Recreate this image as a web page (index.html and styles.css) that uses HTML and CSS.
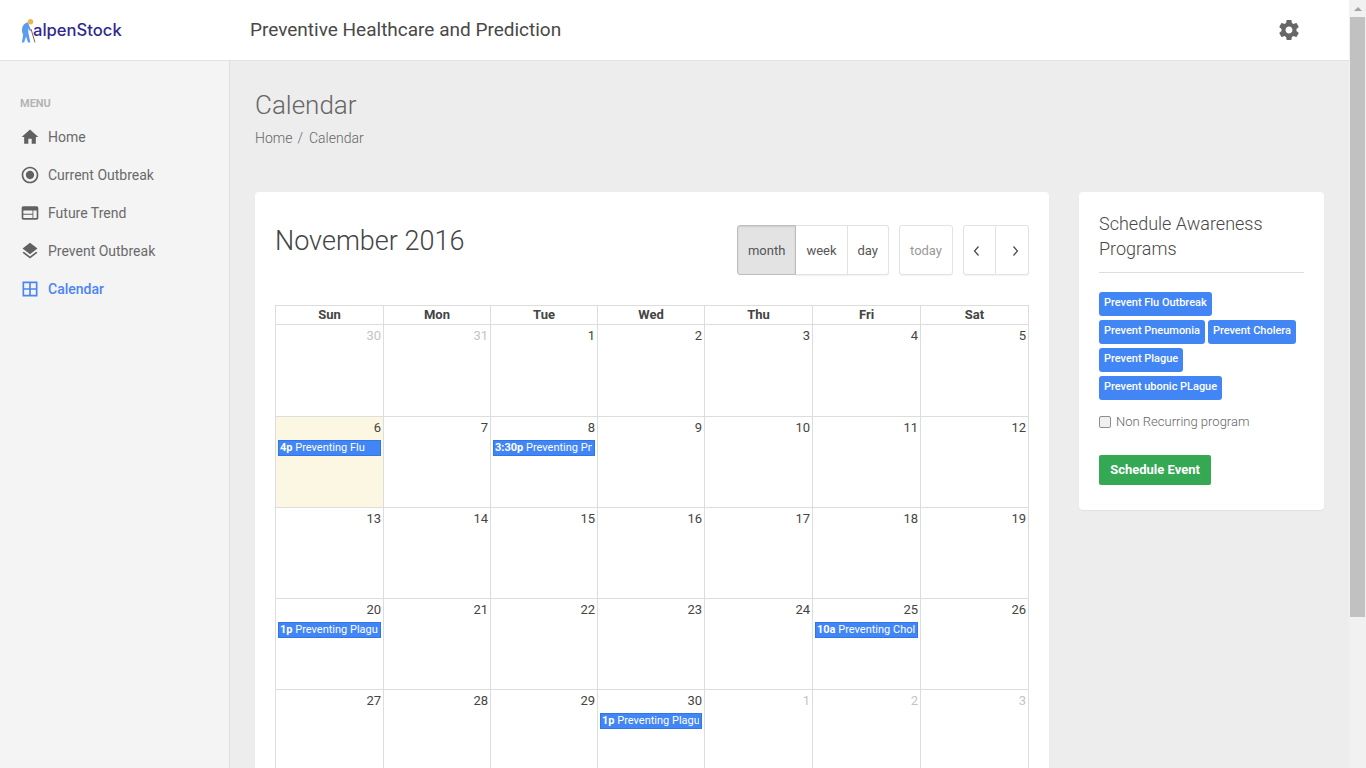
FILE: index.html
```html
<!DOCTYPE html>
<html lang="en">
<head>
  <meta charset="UTF-8"/>
  <title>alpenStock - Calendar</title>
  <link rel="stylesheet" href="styles.css">
</head>
<body>

  <header class="topbar">
    <a class="logo">
      <svg class="logo-mark" width="18" height="24" viewBox="0 0 18 24">
        <circle cx="9.500" cy="2.800" r="2.700" fill="#f0b64c"/>
        <path d="M6.500 3.200C3 4.200 1 7.500 1 11c0 2 .5 3.500 1.200 4.800L.8 23.500h2.400l1.800-6 2 6h2.400L7.500 14.500 7 9.500c.6 1 1.400 2 2.400 2.700l.8-1C8.800 9.500 8.600 6 6.500 3.200z" fill="#5a9cf0"/>
        <path d="M10 10l4 13.500" stroke="#8a6a4a" stroke-width="1" fill="none"/>
      </svg>
      <span class="logo-text">alpenStock</span>
    </a>
    <div class="topbar-title">Preventive Healthcare and Prediction</div>
    <svg class="settings" width="24" height="24" viewBox="0 0 24 24"><path d="M19.430 12.980c.04-.32.07-.64.07-.98s-.03-.66-.07-.98l2.110-1.650c.19-.15.24-.42.12-.64l-2-3.460c-.12-.22-.39-.3-.61-.22l-2.490 1c-.52-.4-1.080-.73-1.690-.98l-.38-2.650C14.460 2.180 14.250 2 14 2h-4c-.25 0-.46.18-.49.42l-.38 2.650c-.61.25-1.170.59-1.690.98l-2.490-1c-.23-.09-.49 0-.61.22l-2 3.460c-.13.22-.07.49.12.64l2.110 1.650c-.04.32-.07.65-.07.98s.03.66.07.98l-2.110 1.650c-.19.15-.24.42-.12.64l2 3.460c.12.22.39.3.61.22l2.490-1c.52.4 1.080.73 1.690.98l.38 2.650c.03.24.24.42.49.42h4c.25 0 .46-.18.49-.42l.38-2.650c.61-.25 1.170-.59 1.690-.98l2.490 1c.23.09.49 0 .61-.22l2-3.460c.12-.22.07-.49-.12-.64l-2.110-1.650zM12 15.500c-1.930 0-3.500-1.570-3.500-3.500s1.570-3.500 3.500-3.500 3.500 1.570 3.500 3.500-1.570 3.500-3.500 3.500z"/></svg>
  </header>

  <div class="layout">
    <!-- Sidebar -->
    <nav class="sidebar">
      <div class="menu-label">MENU</div>
      <a class="menu-item">
        <svg width="20" height="20" viewBox="0 0 24 24"><path d="M10 20v-6h4v6h5v-8h3L12 3 2 12h3v8z"/></svg>
        Home
      </a>
      <a class="menu-item">
        <svg width="20" height="20" viewBox="0 0 24 24"><path d="M12 7c-2.760 0-5 2.240-5 5s2.240 5 5 5 5-2.240 5-5-2.240-5-5-5zm0-5C6.480 2 2 6.480 2 12s4.480 10 10 10 10-4.480 10-10S17.520 2 12 2zm0 18c-4.420 0-8-3.580-8-8s3.580-8 8-8 8 3.580 8 8-3.580 8-8 8z"/></svg>
        Current Outbreak
      </a>
      <a class="menu-item">
        <svg width="20" height="20" viewBox="0 0 24 24"><path d="M20 4H4c-1.100 0-1.990.9-1.990 2L2 18c0 1.100.9 2 2 2h16c1.100 0 2-.9 2-2V6c0-1.100-.9-2-2-2zm-5 14H4v-4h11v4zm0-5H4V9h11v4zm5 5h-4V9h4v9z"/></svg>
        Future Trend
      </a>
      <a class="menu-item">
        <svg width="20" height="20" viewBox="0 0 24 24"><path d="M11.990 18.540l-7.370-5.730L3 14.070l9 7 9-7-1.630-1.270-7.380 5.740zM12 16l7.360-5.730L21 9l-9-7-9 7 1.630 1.270L12 16z"/></svg>
        Prevent Outbreak
      </a>
      <a class="menu-item active">
        <svg width="20" height="20" viewBox="0 0 24 24"><path d="M3 3v18h18V3H3zm8 16H5v-6h6v6zm0-8H5V5h6v6zm8 8h-6v-6h6v6zm0-8h-6V5h6v6z"/></svg>
        Calendar
      </a>
    </nav>

    <main class="content">
      <h1 class="page-title">Calendar</h1>
      <div class="breadcrumb"><span>Home</span><span class="sep">/</span><span>Calendar</span></div>

      <div class="columns">
        <section class="card calendar-card">
          <div class="cal-toolbar">
            <h2 class="cal-title">November 2016</h2>
            <div class="cal-buttons">
              <div class="btn-group">
                <button class="cal-btn pressed">month</button>
                <button class="cal-btn">week</button>
                <button class="cal-btn">day</button>
              </div>
              <button class="cal-btn today">today</button>
              <div class="btn-group">
                <button class="cal-btn arrow prev"><svg width="12" height="12" viewBox="0 0 12 12"><path d="M7.500 1.500L3.500 6l4 4.500"/></svg></button>
                <button class="cal-btn arrow next"><svg width="12" height="12" viewBox="0 0 12 12"><path d="M4.500 1.500L8.500 6l-4 4.500"/></svg></button>
              </div>
            </div>
          </div>

          <table class="cal-table">
            <thead>
              <tr><th>Sun</th><th>Mon</th><th>Tue</th><th>Wed</th><th>Thu</th><th>Fri</th><th>Sat</th></tr>
            </thead>
            <tbody>
              <tr class="first-week">
                <td class="other">30</td><td class="other">31</td><td>1</td><td>2</td><td>3</td><td>4</td><td>5</td>
              </tr>
              <tr>
                <td class="today-cell">6<div class="event"><b>4p</b> Preventing Flu</div></td>
                <td>7</td>
                <td>8<div class="event"><b>3:30p</b> Preventing Pneumonia</div></td>
                <td>9</td><td>10</td><td>11</td><td>12</td>
              </tr>
              <tr>
                <td>13</td><td>14</td><td>15</td><td>16</td><td>17</td><td>18</td><td>19</td>
              </tr>
              <tr>
                <td>20<div class="event"><b>1p</b> Preventing Plague</div></td>
                <td>21</td><td>22</td><td>23</td><td>24</td>
                <td>25<div class="event"><b>10a</b> Preventing Cholera</div></td>
                <td>26</td>
              </tr>
              <tr>
                <td>27</td><td>28</td><td>29</td>
                <td>30<div class="event"><b>1p</b> Preventing Plague</div></td>
                <td class="other">1</td><td class="other">2</td><td class="other">3</td>
              </tr>
            </tbody>
          </table>
        </section>

        <aside class="card side-card">
          <h3 class="side-title">Schedule Awareness Programs</h3>
          <div class="tags">
            <span class="tag">Prevent Flu Outbreak</span>
            <span class="tag">Prevent Pneumonia</span>
            <span class="tag">Prevent Cholera</span>
            <span class="tag">Prevent Plague</span>
            <span class="tag">Prevent ubonic PLague</span>
          </div>
          <label class="check-row"><span class="check-box"></span>Non Recurring program</label>
          <button class="schedule-btn">Schedule Event</button>
        </aside>
      </div>
    </main>
  </div>

  <!-- Window scrollbar as it appears in the screenshot -->
  <div class="scrollbar">
    <div class="scroll-arrow"></div>
    <div class="scroll-thumb"></div>
  </div>

</body>
</html>
```

FILE: styles.css
```css
* { box-sizing: border-box; margin: 0; padding: 0; }
body, html { height: 100%; font-family: Roboto, sans-serif; overflow: hidden; }
body { background: #ededed; color: #5f5f5f; font-size: 14px; }

.topbar {
  display: flex;
  align-items: center;
  height: 61px;
  padding-right: 17px;
  background: #fff;
  border-bottom: 1px solid #e2e2e2;
}

.logo {
  display: flex;
  align-items: center;
  width: 250px;
  padding-left: 21px;
}
.logo-mark { flex: none; margin-top: 2px; }
.logo-text {
  margin-left: -6px;
  font-family: Inter, sans-serif;
  font-size: 16.600px;
  font-weight: 500;
  color: #2f2a8f;
}

.topbar-title { flex: 1; margin-top: -2px; font-size: 19px; color: #484848; }

.settings { fill: #666; margin-right: 48px; }

.layout { display: flex; height: 707px; }

.sidebar {
  flex: none;
  width: 230px;
  padding-top: 36px;
  background: #f4f4f4;
  border-right: 1px solid #dedede;
}

.menu-label {
  padding-left: 20px;
  margin-bottom: 8px;
  font-size: 11px;
  font-weight: 700;
  line-height: 13px;
  color: #b4b4b4;
}

.menu-item {
  display: flex;
  align-items: center;
  gap: 18px;
  height: 38px;
  padding-left: 20px;
  font-size: 14px;
  color: #6a6a6a;
}
.menu-item svg { fill: #616161; flex: none; margin-right: -10px; }
.menu-item.active { color: #4c84f4; font-weight: 500; }
.menu-item.active svg { fill: #4c84f4; }

.content {
  flex: 1;
  min-width: 0;
  padding: 27px 42px 0 25px;
  overflow: hidden;
}

.page-title {
  font-size: 26px;
  font-weight: 300;
  line-height: 34px;
  color: #666;
}

.breadcrumb {
  display: flex;
  gap: 5px;
  margin-top: 7px;
  font-size: 14px;
  line-height: 18px;
  font-weight: 300;
  color: #666;
}
.breadcrumb .sep { margin-right: 1px; }

.columns {
  display: flex;
  align-items: flex-start;
  gap: 30px;
  margin-top: 45px;
}

.card {
  background: #fff;
  border-radius: 4px;
  box-shadow: 0 1px 1px rgba(0,0,0,0.05);
}

.calendar-card {
  flex: none;
  width: 794px;
  padding: 33px 20px 0;
  height: 640px;
}

.cal-toolbar {
  display: flex;
  justify-content: space-between;
  align-items: flex-start;
  height: 80px;
}

.cal-title {
  margin-top: 1px;
  font-size: 27px;
  font-weight: 300;
  line-height: 30px;
  color: #444;
}

.cal-buttons { display: flex; gap: 10px; }
.btn-group { display: flex; }

.cal-btn {
  height: 50px;
  padding: 0 10px;
  font-family: Roboto, sans-serif;
  font-size: 13px;
  color: #555;
  background: #fff;
  border: 1px solid #e3e3e3;
  border-left-width: 0;
  box-shadow: 0 1px 1px rgba(0,0,0,0.05);
}
.btn-group .cal-btn:first-child { border-left-width: 1px; border-radius: 3px 0 0 3px; }
.btn-group .cal-btn:last-child { border-radius: 0 3px 3px 0; }

.cal-btn.pressed {
  background: #e3e3e3;
  border: 1px solid #bdbdbd;
  box-shadow: inset 0 1px 2px rgba(0,0,0,0.1);
}

.cal-btn.today {
  width: 54px;
  padding: 0;
  color: #999;
  border-left-width: 1px;
  border-radius: 3px;
}

.cal-btn.arrow { padding: 0; }
.cal-btn.prev { width: 33px; padding-right: 5px; }
.cal-btn.next { width: 33px; padding-left: 5px; }
.cal-btn.arrow svg { fill: none; stroke: #444; stroke-width: 1.200; vertical-align: middle; }

.cal-table {
  width: 754px;
  table-layout: fixed;
  border-collapse: collapse;
}
.cal-table th, .cal-table td { border: 1px solid #ddd; }
.cal-table th {
  width: 108px;
  height: 19px;
  font-size: 13px;
  font-weight: 700;
  line-height: 16px;
  color: #444;
}
.cal-table th:nth-child(2), .cal-table th:nth-child(3), .cal-table th:nth-child(4) { width: 107px; }
.cal-table td {
  height: 91px;
  padding: 3px 2px 0;
  vertical-align: top;
  text-align: right;
  font-size: 13px;
  line-height: 16px;
  color: #444;
}
.cal-table .first-week td { height: 92px; }
.cal-table td.other { color: #c4c4c4; }
.cal-table td.today-cell { background: #fcf7e3; }

/* the wide right border keeps the clipped title off the box edge */
.event {
  height: 16px;
  margin: 4px 1px 0 0;
  padding: 0 0 0 1px;
  overflow: hidden;
  white-space: nowrap;
  text-align: left;
  font-size: 11px;
  line-height: 14px;
  color: #fff;
  background: #4285f4;
  border: 1px solid #2f76ee;
  border-right: 2px solid #4285f4;
  box-shadow: 1px 0 #2f76ee;
}
.event b { font-weight: 700; }

.side-card {
  flex: none;
  width: 245px;
  height: 318px;
  padding: 19px 20px 20px;
}

.side-title {
  padding-bottom: 11px;
  border-bottom: 1px solid #ddd;
  font-size: 18px;
  font-weight: 300;
  line-height: 25px;
  color: #484848;
}

.tags {
  display: flex;
  flex-wrap: wrap;
  gap: 4px 3px;
  margin-top: 19px;
}

.tag {
  height: 24px;
  padding: 0 5px;
  font-size: 11px;
  font-weight: 500;
  letter-spacing: -0.02px;
  line-height: 22px;
  color: #fff;
  background: #4285f4;
  border-radius: 3px;
}

.check-row {
  display: flex;
  align-items: center;
  gap: 5px;
  margin-top: 14px;
  font-size: 13px;
  font-weight: 300;
  line-height: 16px;
  color: #666;
}
.check-box {
  width: 12px;
  height: 12px;
  background: #f0f0f0;
  border: 1px solid #8e8e8e;
  border-radius: 2px;
}

.schedule-btn {
  display: block;
  width: 112px;
  height: 30px;
  margin-top: 25px;
  padding-bottom: 2px;
  font-family: Roboto, sans-serif;
  font-size: 13px;
  font-weight: 700;
  color: #fff;
  background: #34a853;
  border: none;
  border-radius: 2px;
}

.scrollbar {
  position: fixed;
  top: 0;
  right: 0;
  width: 17px;
  height: 100%;
  background: #f1f1f1;
}
.scroll-arrow {
  width: 0;
  margin: 7px auto 0;
  border-left: 4px solid transparent;
  border-right: 4px solid transparent;
  border-bottom: 4px solid #a3a3a3;
}
.scroll-thumb {
  position: absolute;
  top: 17px;
  left: 1px;
  width: 15px;
  height: 600px;
  background: #c1c1c1;
}
```
